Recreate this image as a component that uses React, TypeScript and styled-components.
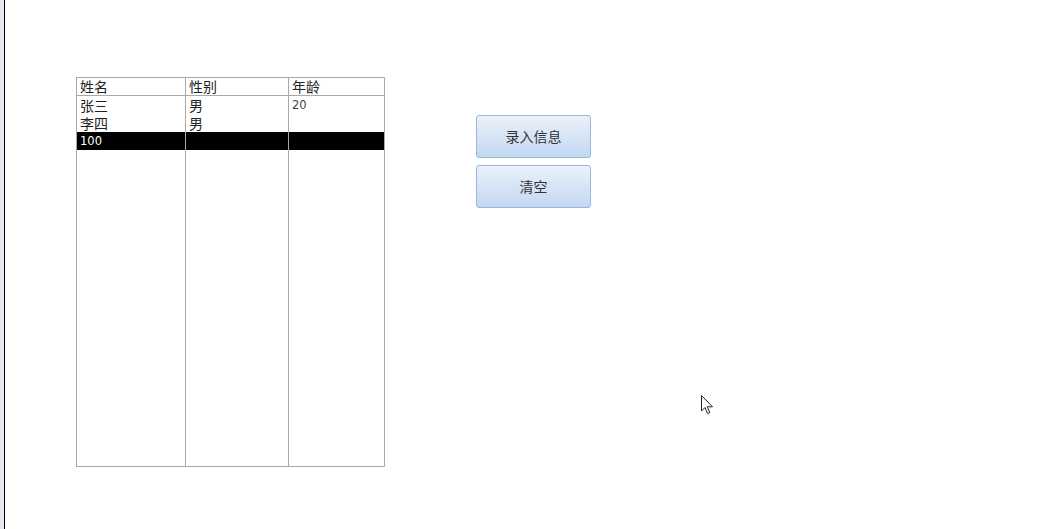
import styled, { createGlobalStyle } from "styled-components";

const GlobalStyle = createGlobalStyle`
    html, body {
        margin: 0;
        padding: 0;
        background: #ffffff;
        font-family: "Noto Sans CJK SC", "DejaVu Sans", sans-serif;
    }
`;

const Page = styled.div`
    position: relative;
    display: flex;
    width: 1045px;
    height: 529px;
    overflow: hidden;
    background: #ffffff;
`;

const Gutter = styled.div`
    width: 4px;
    background: #e6e9f0;
    border-right: 1px solid #000000;
`;

const Content = styled.div`
    display: flex;
    align-items: flex-start;
    gap: 91px;
    padding: 77px 0 0 71px;
`;

const Table = styled.div`
    display: grid;
    grid-template-columns: 109px 103px 95px;
    grid-template-rows: 18px 18px 18px 18px 1fr;
    width: 309px;
    height: 390px;
    border: 1px solid #a9a9a9;
    box-sizing: border-box;
`;

const HeadCell = styled.div<{ $last?: boolean }>`
    border-bottom: 1px solid #a9a9a9;
    border-right: ${(p) => (p.$last ? "none" : "1px solid #a9a9a9")};
    padding-left: 3px;
    font-size: 14px;
    line-height: 17px;
    color: #222;
    white-space: nowrap;
`;

const Cell = styled.div<{ $last?: boolean; $selected?: boolean; $num?: boolean }>`
    border-right: ${(p) => (p.$last ? "none" : "1px solid #a9a9a9")};
    background: ${(p) => (p.$selected ? "#000000" : "transparent")};
    color: ${(p) => (p.$selected ? "#ffffff" : p.$num ? "#444" : "#222")};
    padding-left: 3px;
    font-family: ${(p) =>
        p.$num ? `"DejaVu Sans", sans-serif` : `"Noto Sans CJK SC", sans-serif`};
    font-size: ${(p) => (p.$num ? "11.5px" : "14px")};
    line-height: 18px;
    white-space: nowrap;
`;

const Buttons = styled.div`
    display: flex;
    flex-direction: column;
    gap: 7px;
    margin-top: 38px;
`;

const Button = styled.button`
    width: 115px;
    height: 43px;
    border: 1px solid #98b6df;
    border-radius: 3px;
    background: linear-gradient(#ebf1fa, #c3d7f2);
    color: #333;
    font-family: "Noto Sans CJK SC", sans-serif;
    font-size: 14px;
    line-height: 1;
    cursor: pointer;
    padding: 0 0 2px;
`;

const Pointer = styled.svg`
    position: absolute;
    left: 701px;
    top: 395px;
`;

const rows = [
    { name: "张三", sex: "男", age: "20" },
    { name: "李四", sex: "男", age: "" },
];

export default function App() {
    return (
        <Page>
            <GlobalStyle />
            <Gutter />
            <Content>
                <Table>
                    <HeadCell>姓名</HeadCell>
                    <HeadCell>性别</HeadCell>
                    <HeadCell $last>年龄</HeadCell>
                    {rows.map((r) => [
                        <Cell key={r.name + "n"}>{r.name}</Cell>,
                        <Cell key={r.name + "s"}>{r.sex}</Cell>,
                        <Cell key={r.name + "a"} $last $num>{r.age}</Cell>,
                    ])}
                    <Cell $selected $num>100</Cell>
                    <Cell $selected />
                    <Cell $selected $last />
                    <Cell />
                    <Cell />
                    <Cell $last />
                </Table>
                <Buttons>
                    <Button>录入信息</Button>
                    <Button>清空</Button>
                </Buttons>
            </Content>
            <Pointer width="13" height="21" viewBox="0 0 13 21">
                <path
                    d="M0.5 0.5 L0.5 16 L4 12.5 L6.5 18.5 L8.8 17.5 L6.3 11.8 L11.5 11.8 Z"
                    fill="#ffffff"
                    stroke="#222"
                    strokeWidth="1"
                    strokeLinejoin="miter"
                />
            </Pointer>
        </Page>
    );
}
